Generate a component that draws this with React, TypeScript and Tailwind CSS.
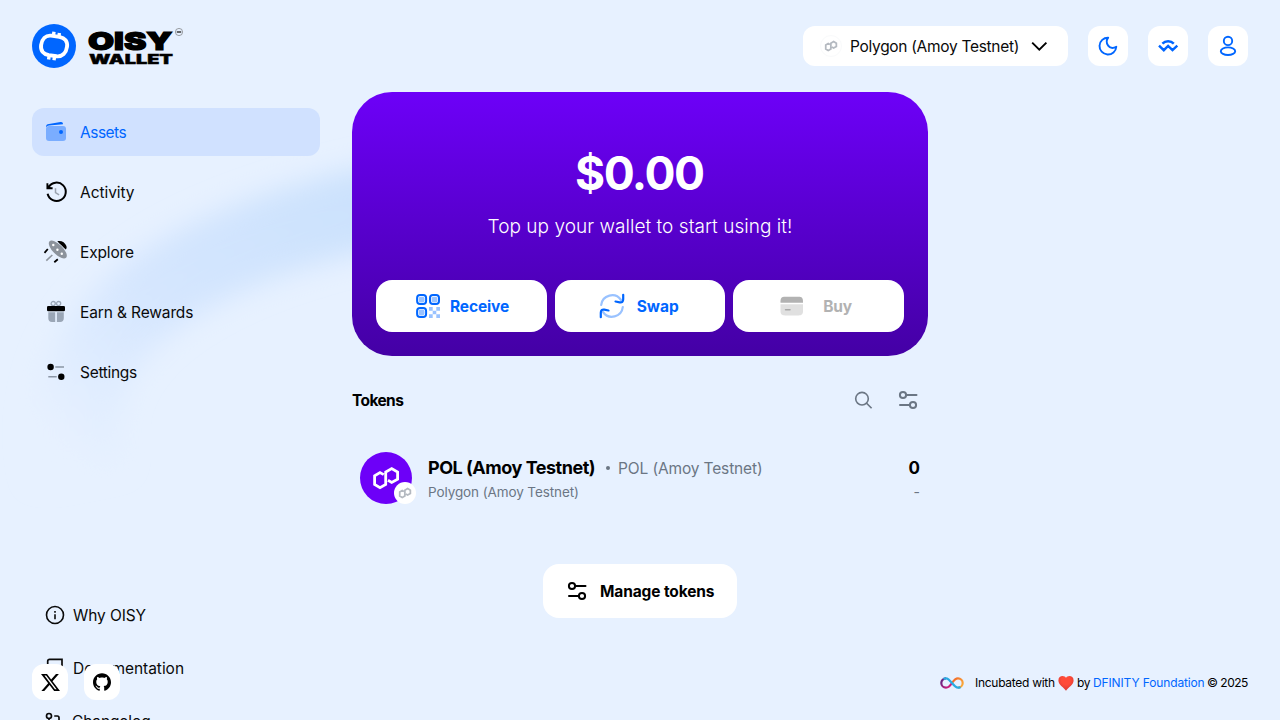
import React from "react";
import { GitPullRequest } from "lucide-react";
import { SiX, SiGithub } from "react-icons/si";

function Backdrop() {
  return (
    <svg className="pointer-events-none absolute inset-0 h-full w-full" viewBox="0 0 1280 720">
      <defs>
        <filter id="soft" x="-30%" y="-30%" width="160%" height="160%">
          <feGaussianBlur stdDeviation="14" />
        </filter>
        <linearGradient id="arc" gradientUnits="userSpaceOnUse" x1="340" y1="190" x2="80" y2="460">
          <stop offset="0" stopColor="#cce2fd" />
          <stop offset="0.55" stopColor="#d5e6fe" />
          <stop offset="1" stopColor="#e7f1ff" />
        </linearGradient>
      </defs>
      <path
        d="M80 470C55 340 150 230 520 182"
        fill="none"
        stroke="url(#arc)"
        strokeWidth="82"
        filter="url(#soft)"
      />
    </svg>
  );
}

function Logo() {
  return (
    <svg width="154" height="44" viewBox="0 0 154 44" className="block shrink-0">
      <circle cx="22" cy="22" r="22" fill="#0066ff" />
      <g fill="none" stroke="#fff" strokeLinecap="butt">
        <path
          d="M17.600 12.200h8.400c5.800.2 9 3.600 9 8.800 0 6.400-3.200 10.600-9 10.800h-7.800c-5.700-.2-9.100-3.400-9.100-8.900 0-6.300 3.200-10.500 8.500-10.700Z"
          strokeWidth="3.900"
          transform="rotate(8 22 22)"
        />
        <path d="M22 7.700l-.6 4M27.400 8.900l-.6 4M17.200 31.500l-.6 4M22.600 32.200l-.6 4" strokeWidth="3.400" />
      </g>
      <text
        x="56"
        y="26.100"
        fontFamily="Inter, sans-serif"
        fontWeight="900"
        fontSize="25"
        textLength="84.500"
        lengthAdjust="spacingAndGlyphs"
        fill="#000"
        stroke="#000"
        strokeWidth="1.200"
      >
        OISY
      </text>
      <text
        x="57"
        y="39.600"
        fontFamily="Inter, sans-serif"
        fontWeight="900"
        fontSize="12.800"
        textLength="84"
        lengthAdjust="spacingAndGlyphs"
        fill="#000"
        stroke="#000"
        strokeWidth="0.400"
      >
        WALLET
      </text>
      <circle cx="147" cy="8" r="3.600" fill="none" stroke="#666" strokeWidth="0.600" />
      <path d="M144.800 8h4.400" stroke="#444" strokeWidth="1.600" />
    </svg>
  );
}

const LINK = "M23.700 22.600 20 20.500 14.600 23.800v8.600L20 35.700l5.700-3.300V20l6-3.500L37.600 20v7.100l-5.900 3.300-3.700-2.100";

function PolygonMark({ className, size, width }: { className: string; size: number; width: number }) {
  return (
    <svg width={size} height={size} viewBox="0 0 52 52" className={className}>
      <path d={LINK} fill="none" stroke="currentColor" strokeWidth={width} />
    </svg>
  );
}

function Sliders() {
  return (
    <svg width="24" height="24" viewBox="0 0 24 24" fill="none" stroke="currentColor" strokeWidth="2" strokeLinecap="round">
      <circle cx="7" cy="7" r="3.100" />
      <path d="M10.500 7H20.500M4 17h9.500" />
      <circle cx="17" cy="17" r="3.100" />
    </svg>
  );
}

const navIcons = {
  assets: (
    <>
      <rect x="2" y="6" width="20" height="15" rx="3" fill="#7aadff" />
      <path d="M2 7.200C2 4.700 3 4.300 5 4L16.500 2.100C18 1.800 19 2.600 19 4.200L5 5.600Q3 5.800 2 7.200Z" fill="#0066ff" />
      <circle cx="17" cy="12" r="2" fill="#0066ff" />
    </>
  ),
  activity: (
    <g fill="none" strokeLinecap="butt">
      <path d="M4.600 7.200A9.200 9.200 0 1 1 3.600 13.800" stroke="#000" strokeWidth="2" />
      <path d="M3.400 3.200v5h5.200" stroke="#000" strokeWidth="1.900" />
      <path d="M3 4l4.500 4.500H3z" fill="#000" />
      <path d="M11.500 8.300v4.300l3.600 2.200" stroke="#9aa3ae" strokeWidth="1.500" />
    </g>
  ),
  explore: (
    <>
      <ellipse cx="13.800" cy="9.500" rx="11.700" ry="5" transform="rotate(45 13.800 9.500)" fill="#8c939c" />
      <path d="M13.300 1.300C17 .2 21 2.200 22.400 6c.5 1.700.2 2.600-.6 3.400C19.500 7.500 16 4 13.300 1.300Z" fill="#000" />
      <circle cx="9.300" cy="5" r="1.200" fill="#fff" />
      <circle cx="13.400" cy="9.800" r="1.200" fill="#fff" />
      <circle cx="17.800" cy="13.800" r="1.200" fill="#fff" />
      <path d="M.5 12.800 3.800 9M10.300 22.300l3.500-3" stroke="#000" strokeWidth="1.800" />
      <path d="M2.300 20.600 8.300 15" stroke="#8c939c" strokeWidth="1.600" />
    </>
  ),
  earn: (
    <>
      <g fill="none" stroke="#9aa6b6" strokeWidth="1.300">
        <circle cx="9.200" cy="3.600" r="2.100" />
        <circle cx="14.600" cy="3.600" r="2.100" />
      </g>
      <rect x="3" y="6" width="18" height="5.300" rx="1.300" fill="#000" />
      <path d="M4.300 12.300h6.900v9.600H8a3.700 3.700 0 0 1-3.700-3.700ZM12.900 12.300h6.900v5.900a3.700 3.700 0 0 1-3.700 3.700h-3.200Z" fill="#9aa6b6" />
    </>
  ),
  settings: (
    <>
      <path d="M11.300 7H20M4.300 16.700h8.400" stroke="#8b96a5" strokeWidth="1.500" />
      <circle cx="6.600" cy="7" r="3.200" fill="#000" />
      <circle cx="17.300" cy="16.700" r="3.200" fill="#000" />
    </>
  ),
};

const nav: { key: keyof typeof navIcons; label: string; cls: string }[] = [
  { key: "assets", label: "Assets", cls: "bg-[#d0e1ff] text-[#0066ff] tracking-[-0.5px]" },
  { key: "activity", label: "Activity", cls: "tracking-[-0.05px]" },
  { key: "explore", label: "Explore", cls: "tracking-[-0.15px]" },
  { key: "earn", label: "Earn & Rewards", cls: "tracking-[-0.13px]" },
  { key: "settings", label: "Settings", cls: "tracking-[-0.3px]" },
];

function Sidebar() {
  return (
    <aside className="flex w-72 shrink-0 flex-col pt-4">
      <nav className="flex flex-col gap-3">
        {nav.map((n) => (
          <a key={n.key} className={"flex h-12 items-center gap-3 rounded-xl pl-3 " + n.cls}>
            <svg width="24" height="24" viewBox="0 0 24 24" className="overflow-visible">
              {navIcons[n.key]}
            </svg>
            <span className="pt-0.5">{n.label}</span>
          </a>
        ))}
      </nav>
      <div className="mt-[207px] flex flex-col gap-[29px] pl-[13px] tracking-[-0.1px]">
        <a className="flex h-6 items-center gap-2">
          <svg width="20" height="20" viewBox="0 0 20 20" fill="none" stroke="currentColor" strokeWidth="1.600">
            <circle cx="10" cy="10" r="8.500" />
            <path d="M10 9.200v5M10 6v1.700" />
          </svg>
          <span className="pt-0.5">Why OISY</span>
        </a>
        <a className="flex h-6 items-center gap-2">
          <svg width="20" height="20" viewBox="0 0 20 20" fill="none" stroke="currentColor" strokeWidth="1.700">
            <path d="M2.700 17V3.200A1.800 1.800 0 0 1 4.500 1.400H17V14H4.500A2 2 0 0 0 2.700 17c0 1 1 1.800 1.800 1.800H17V14" />
          </svg>
          <span className="pt-0.5 tracking-[-0.03px]">Documentation</span>
        </a>
        <a className="-ml-px flex h-6 shrink-0 items-center gap-2">
          <GitPullRequest size={20} strokeWidth={2} />
          <span className="pt-0.5">Changelog</span>
        </a>
      </div>
    </aside>
  );
}

function Header() {
  const box = "flex size-10 items-center justify-center rounded-xl bg-white text-[#0066ff]";
  return (
    <header className="flex h-[92px] items-center justify-between px-8">
      <Logo />
      <div className="flex items-center gap-5">
        <button className="flex h-10 w-[265px] items-center rounded-xl bg-white pl-[17px]">
          <span className="flex size-[22px] items-center justify-center rounded-full border border-[#f9fafb] text-[#b4b9c0]">
            <PolygonMark className="shrink-0" size={24} width={3.800} />
          </span>
          <span className="ml-2 w-[170px] pt-0.5 text-left tracking-[-0.300px] whitespace-nowrap">Polygon (Amoy Testnet)</span>
          <svg width="24" height="24" viewBox="0 0 24 24" className="ml-[7px]" fill="none" stroke="#000" strokeWidth="1.900">
            <path d="m5.200 8.600 7.100 7.100 7.100-7.100" />
          </svg>
        </button>
        <button className={box}>
          <svg width="24" height="24" viewBox="0 0 24 24" fill="none" stroke="currentColor" strokeWidth="1.900" strokeLinejoin="round">
            <path d="M12.200 3.700C8.300 8.500 13.300 17 20.300 12.700A8.400 8.400 0 1 1 12.200 3.700Z" />
          </svg>
        </button>
        <button className={box}>
          <svg width="24" height="24" viewBox="0 0 24 24" fill="none" stroke="currentColor" strokeWidth="2.400">
            <path d="M6.400 9.600c3-3.200 8.400-3.200 11.400 0M3 11.600l4.800 4.600 4.300-4.300 4.400 4.300 4.800-4.600" />
          </svg>
        </button>
        <button className={box}>
          <svg width="24" height="24" viewBox="0 0 24 24" fill="none" stroke="currentColor" strokeWidth="1.900">
            <circle cx="12" cy="6.900" r="4.200" />
            <ellipse cx="12" cy="17.200" rx="7.200" ry="3.800" />
          </svg>
        </button>
      </div>
    </header>
  );
}

function Balance() {
  const action = "flex h-[52px] items-center rounded-2xl bg-white font-bold text-[#0066ff]";
  return (
    <section className="flex h-[264px] flex-col rounded-[40px] bg-linear-to-b from-[#6d00f8] to-[#4400a5] px-6 pt-[51px] text-center text-white">
      <div className="h-[60px] pr-[1.500px] text-[46px] leading-[60px] font-bold tracking-[-1.500px]">$0.00</div>
      <div className="mt-2 pt-px text-[19px] leading-[30px] font-[350] tracking-[0.040px]">Top up your wallet to start using it!</div>
      <div className="mt-[38px] grid grid-cols-3 gap-2">
        <button className={action + " pl-10"}>
          <svg width="24" height="24" viewBox="0 0 24 24">
            <g fill="none" stroke="#0066ff" strokeWidth="2">
              <rect x="1.100" y="1.100" width="9" height="9" rx="3" />
              <rect x="14" y="1.100" width="9" height="9" rx="3" />
              <rect x="1.100" y="14" width="9" height="9" rx="3" />
            </g>
            <g fill="#99c2ff">
              <rect x="2.700" y="2.700" width="5.800" height="5.800" rx="1.800" />
              <rect x="15.600" y="2.700" width="5.800" height="5.800" rx="1.800" />
              <rect x="2.700" y="15.600" width="5.800" height="5.800" rx="1.800" />
              <path d="M13 13h3.700v3.700H13zM20.300 13H24v3.700h-3.700zM16.700 16.700h3.600v3.600h-3.600zM13 20.300h3.700V24H13zM20.300 20.300H24V24h-3.700z" />
            </g>
          </svg>
          <span className="ml-2.5 pt-0.5 tracking-[-0.150px]">Receive</span>
        </button>
        <button className={action + " pl-[45px]"}>
          <svg width="24" height="24" viewBox="0 0 24 24" fill="none" strokeWidth="2.200" strokeLinecap="round" className="overflow-visible">
            <path d="M1.200 11A10.900 10.900 0 0 1 21 6M22.800 13A10.900 10.900 0 0 1 3 18" stroke="#99c2ff" />
            <path d="M23.200.8v4.500q0 3.600-3.500 3L15.500 7.500M.8 23.200v-4.500q0-3.600 3.500-3l4.200.8" stroke="#0066ff" />
          </svg>
          <span className="ml-[13px] pt-0.5">Swap</span>
        </button>
        <button className={action + " pl-[46.500px]"}>
          <svg width="24" height="24" viewBox="0 0 24 24">
            <path d="M.5 7.600C.5 4 1.700 2.700 5 2.700h13.500c3.300 0 4.500 1.300 4.500 4.900v1.100H.5Z" fill="#b2b2b2" />
            <path d="M.5 10.300H23V17c0 3.200-1.300 4.400-4.500 4.400H5C1.800 21.400.5 20.200.5 17Z" fill="#e0e0e0" />
            <path d="M5.500 15.700h4.500" stroke="#a8a8a8" strokeWidth="1.500" strokeLinecap="round" />
          </svg>
          <span className="ml-[19.500px] pt-0.5 tracking-[-0.300px] text-[#b2b2b2]">Buy</span>
        </button>
      </div>
    </section>
  );
}

function Tokens() {
  return (
    <section className="flex flex-col">
      <div className="mt-8 flex h-6 items-center justify-between pr-2">
        <h2 className="pt-0.5 font-bold tracking-[-0.600px] text-black">Tokens</h2>
        <div className="flex items-center gap-5 text-[#6b7684]">
          <svg width="24" height="24" viewBox="0 0 24 24" fill="none" stroke="currentColor" strokeWidth="1.600">
            <circle cx="10" cy="10.700" r="6.300" />
            <path d="m14.600 15.300 5 5" />
          </svg>
          <Sliders />
        </div>
      </div>
      <div className="mt-10 flex h-[52px] items-center px-2">
        <div className="relative size-[52px] rounded-full bg-[#6d00f8] text-white">
          <PolygonMark className="block" size={52} width={2.800} />
          <span className="absolute top-[30px] left-[34px] flex size-[22px] items-center justify-center rounded-full bg-white text-[#b4b9c0]">
            <PolygonMark className="shrink-0" size={24} width={3.800} />
          </span>
        </div>
        <div className="ml-4 flex-1">
          <div className="flex h-7 items-center">
            <span className="text-lg font-bold tracking-[-0.480px] text-black">POL (Amoy Testnet)</span>
            <span className="ml-[11px] size-1 rounded-full bg-[#6b7684]" />
            <span className="ml-2 pt-0.5 tracking-[-0.140px] text-[#6b7684]">POL (Amoy Testnet)</span>
          </div>
          <div className="h-5 text-[13.500px] leading-5 tracking-[-0.100px] text-[#6b7684]">Polygon (Amoy Testnet)</div>
        </div>
        <div className="text-right">
          <div className="h-7 text-[17px] leading-7 font-bold text-black">0</div>
          <div className="h-5 text-sm leading-5 text-[#6b7684]">-</div>
        </div>
      </div>
      <button className="mt-[60px] flex h-[54px] w-[194px] items-center self-center rounded-2xl bg-white pl-[22px] font-bold whitespace-nowrap text-black">
        <Sliders />
        <span className="ml-[11px] pt-0.5 tracking-[-0.130px]">Manage tokens</span>
      </button>
    </section>
  );
}

function Footer() {
  const box = "flex size-9 items-center justify-center rounded-xl bg-white text-black";
  return (
    <footer className="absolute inset-x-8 bottom-5 flex h-9 items-center justify-between">
      <div className="flex gap-4">
        <a className={box}>
          <SiX size={19} />
        </a>
        <a className={box}>
          <SiGithub size={18} />
        </a>
      </div>
      <div className="flex items-center pt-0.5 text-xs text-black">
        <svg width="24" height="12" viewBox="0 0 24 12" fill="none" strokeWidth="2.200">
          <defs>
            <linearGradient id="warm" x1="12" y1="0" x2="24" y2="8" gradientUnits="userSpaceOnUse">
              <stop offset="0" stopColor="#f15a24" />
              <stop offset="1" stopColor="#fbb03b" />
            </linearGradient>
            <linearGradient id="pink" x1="0" y1="2" x2="12" y2="11" gradientUnits="userSpaceOnUse">
              <stop offset="0" stopColor="#522785" />
              <stop offset="1" stopColor="#ed1e79" />
            </linearGradient>
          </defs>
          <path d="M6 1.300A4.700 4.700 0 1 0 6 10.700c2.300 0 4-1.700 6-4.700" stroke="url(#pink)" />
          <path d="M12 6c2-3 3.700-4.700 6-4.700a4.700 4.700 0 1 1 0 9.400" stroke="url(#warm)" />
          <path d="M3.500 2A4.700 4.700 0 0 1 6 1.300c4.500 0 7.500 9.400 12 9.400a4.700 4.700 0 0 0 2.500-.7" stroke="#29abe2" />
        </svg>
        <span className="ml-[11px] w-20 tracking-[-0.280px] whitespace-nowrap">Incubated with</span>
        <svg width="16" height="16" viewBox="0 0 16 16" className="ml-[3px]">
          <defs>
            <radialGradient id="heart" cx="0.5" cy="0.3" r="0.7">
              <stop offset="0.4" stopColor="#ff4b38" />
              <stop offset="1" stopColor="#d83a34" />
            </radialGradient>
          </defs>
          <path d="M8 3C6.800.2.400.1.400 5.400.4 9.600 5.500 12.200 8 15.700c2.500-3.500 7.600-6.100 7.600-10.300C15.600.1 9.200.2 8 3Z" fill="url(#heart)" />
        </svg>
        <span className="ml-[3px] w-[13px] tracking-[-0.300px]">by</span>
        <a className="ml-[3px] w-[111px] tracking-[-0.130px] whitespace-nowrap text-[#0066ff]">DFINITY Foundation</a>
        <span className="ml-[3px] w-[41px] tracking-[-0.500px] whitespace-nowrap">© 2025</span>
      </div>
    </footer>
  );
}

export default function App() {
  return (
    <div className="relative h-[720px] w-full overflow-hidden bg-[#e7f1ff] font-['Inter',sans-serif] text-[15.500px] text-[#0a0a0a]">
      <Backdrop />
      <div className="relative">
        <Header />
        <div className="flex gap-8 px-8">
          <Sidebar />
          <main className="flex w-[576px] flex-col">
            <Balance />
            <Tokens />
          </main>
        </div>
      </div>
      <Footer />
    </div>
  );
}
